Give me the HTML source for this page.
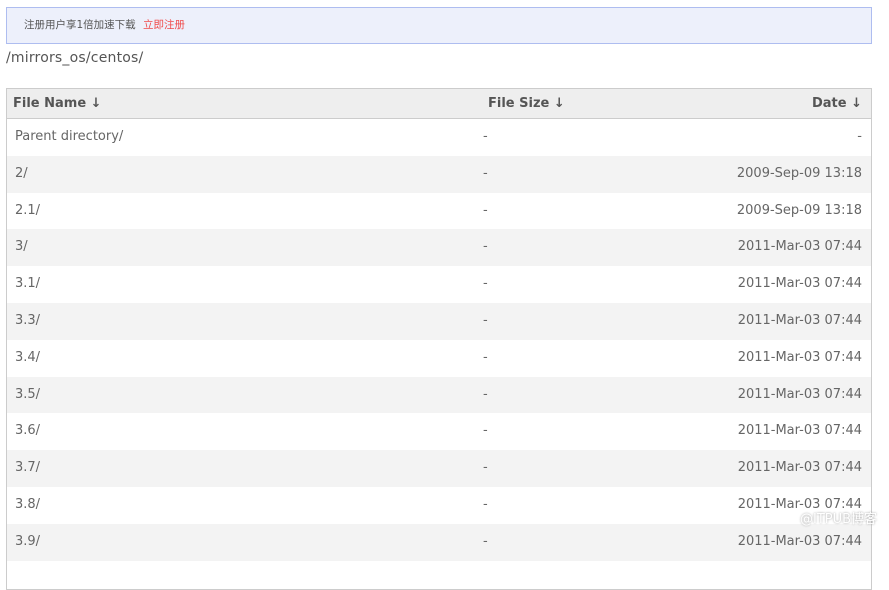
<!DOCTYPE html>
<html><head><meta charset="utf-8"><style>
body{margin:0;background:#fff;width:889px;height:532px;overflow:hidden;font-family:"DejaVu Sans","Noto Sans CJK SC",sans-serif;color:#555}
.ban{position:absolute;left:6px;top:7px;width:864px;height:35px;background:#edf0fb;border:1px solid #aebdf0;font-size:10.5px;line-height:35px;color:#555}
.ban span{position:absolute;left:17px}
.ban b{font-weight:normal;color:#f04b4b;position:absolute;left:136px}
.path{position:absolute;left:6px;top:50px;font-size:14px;color:#555;letter-spacing:0.2px}
.tbl{position:absolute;left:6px;top:88px;width:864px;border:1px solid #ccc;font-size:13px;height:500px}
.r{position:relative;height:36.8px;line-height:36.8px;color:#666}
.r:nth-child(even){background:#f3f3f3}
.h{height:29px;line-height:29px;background:#eee;border-bottom:1px solid #ccc;font-weight:bold;color:#555}
.r span{position:absolute}
.a{left:8px}.b{left:476px}.c{right:9px}
.h .a{left:6px}.h .b{left:481px}
.wm{position:absolute;left:800px;top:508px;font-size:13px;color:#fff;text-shadow:0 0 2px #999}
</style></head><body>
<div class="ban"><span>注册用户享1倍加速下载</span><b>立即注册</b></div>
<div class="path">/mirrors_os/centos/</div>
<div class="tbl">
<div class="r h"><span class="a">File Name ↓</span><span class="b">File Size ↓</span><span class="c">Date ↓</span></div>
<div>
<div class="r"><span class="a">Parent directory/</span><span class="b">-</span><span class="c">-</span></div>
<div class="r"><span class="a">2/</span><span class="b">-</span><span class="c">2009-Sep-09 13:18</span></div>
<div class="r"><span class="a">2.1/</span><span class="b">-</span><span class="c">2009-Sep-09 13:18</span></div>
<div class="r"><span class="a">3/</span><span class="b">-</span><span class="c">2011-Mar-03 07:44</span></div>
<div class="r"><span class="a">3.1/</span><span class="b">-</span><span class="c">2011-Mar-03 07:44</span></div>
<div class="r"><span class="a">3.3/</span><span class="b">-</span><span class="c">2011-Mar-03 07:44</span></div>
<div class="r"><span class="a">3.4/</span><span class="b">-</span><span class="c">2011-Mar-03 07:44</span></div>
<div class="r"><span class="a">3.5/</span><span class="b">-</span><span class="c">2011-Mar-03 07:44</span></div>
<div class="r"><span class="a">3.6/</span><span class="b">-</span><span class="c">2011-Mar-03 07:44</span></div>
<div class="r"><span class="a">3.7/</span><span class="b">-</span><span class="c">2011-Mar-03 07:44</span></div>
<div class="r"><span class="a">3.8/</span><span class="b">-</span><span class="c">2011-Mar-03 07:44</span></div>
<div class="r"><span class="a">3.9/</span><span class="b">-</span><span class="c">2011-Mar-03 07:44</span></div>
</div>
</div>
<div class="wm">@ITPUB博客</div>
</body></html>
